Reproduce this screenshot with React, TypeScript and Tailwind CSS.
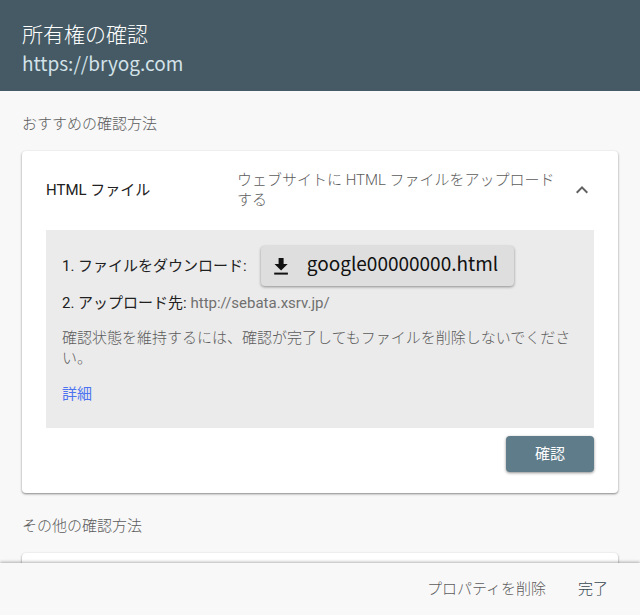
import { useState } from "react";

const cardClass =
    "bg-white rounded-sm shadow-[0_1px_2px_rgba(0,0,0,0.32),0_1px_3px_rgba(0,0,0,0.18)]";

function DownloadIcon() {
    return (
        <svg className="w-5 h-5" viewBox="0 0 20 20" fill="currentColor" aria-hidden="true">
            <path d="M7.6 2h5v6h4.1L10.1 14.4 3.5 8h4.1z" />
            <path d="M3.2 16.6h13.7v2H3.2z" />
        </svg>
    );
}

function ChevronUpIcon() {
    return (
        <svg className="w-6 h-6" viewBox="0 0 24 24" fill="currentColor" aria-hidden="true">
            <path d="M12 8l-6 6 1.41 1.41L12 10.83l4.59 4.58L18 14z" />
        </svg>
    );
}

function SectionLabel({ children }: { children: string }) {
    return <h2 className="mb-[17px] font-light text-[#5c5c5c]">{children}</h2>;
}

function HtmlFileMethod() {
    const [open, setOpen] = useState(true);

    return (
        <div className={cardClass}>
            <button
                type="button"
                aria-expanded={open}
                onClick={() => setOpen(!open)}
                className="flex w-full items-center px-6 pt-[19px] pb-5 text-left cursor-pointer"
            >
                <span className="w-[191px] shrink-0 text-[#212121]">HTML ファイル</span>
                <span className="flex-1 pr-3 font-light text-[#5c5c5c]">
                    ウェブサイトに HTML ファイルをアップロードする
                </span>
                <span className="shrink-0 text-[#606060]">
                    <ChevronUpIcon />
                </span>
            </button>
            {open ? (
                <div className="px-6 pb-[21px]">
                    <div className="bg-[#ebebeb] px-4 pt-4 pb-6">
                        <div className="flex items-center gap-[14px]">
                            <p className="text-[#212121]">1. ファイルをダウンロード:</p>
                            <button
                                type="button"
                                className="flex h-10 items-center gap-4 rounded-sm bg-[#dedede] pl-[10px] pr-4 font-['Noto_Sans_CJK_JP',sans-serif] text-[19px] text-[#111] shadow-[0_1px_3px_rgba(0,0,0,0.4)] cursor-pointer"
                            >
                                <DownloadIcon />
                                <span className="pb-1.5">google00000000.html</span>
                            </button>
                        </div>
                        <p className="mt-[7px] text-[#212121]">
                            2. アップロード先: <span className="text-[#707070]">http://sebata.xsrv.jp/</span>
                        </p>
                        <p className="mt-[15px] font-light text-[#5c5c5c]">
                            確認状態を維持するには、確認が完了してもファイルを削除しないでください。
                        </p>
                        <p className="mt-4">
                            <a href="#details" className="text-[#4d73f0]">
                                詳細
                            </a>
                        </p>
                    </div>
                    <div className="mt-2 flex justify-end">
                        <button
                            type="button"
                            className="h-9 rounded-sm bg-[#5f7c8a] px-[29px] text-white shadow-[0_1px_3px_rgba(0,0,0,0.45)] cursor-pointer"
                        >
                            確認
                        </button>
                    </div>
                </div>
            ) : null}
        </div>
    );
}

export default function App() {
    return (
        <div className="flex h-screen flex-col bg-[#f8f8f8] font-[Roboto,'Noto_Sans_CJK_JP',sans-serif] text-[15px] leading-5">
            <header className="shrink-0 bg-[#455a64] px-[22px] pt-[19px] pb-[14px] font-['Noto_Sans_CJK_JP',sans-serif]">
                <h1 className="text-[21px] leading-7 font-light text-white">所有権の確認</h1>
                <p className="mt-0.5 text-[19px] leading-7 text-[#d3e2e9]">https://bryog.com</p>
            </header>
            <main className="min-h-0 flex-1 overflow-hidden px-[22px] pt-[23px]">
                <section>
                    <SectionLabel>おすすめの確認方法</SectionLabel>
                    <HtmlFileMethod />
                </section>
                <section className="mt-[23px]">
                    <SectionLabel>その他の確認方法</SectionLabel>
                    <div className={`${cardClass} h-20`} />
                </section>
            </main>
            <footer className="relative flex h-[52px] shrink-0 items-center justify-end gap-8 bg-[#f8f8f8] px-8 shadow-[0_-1px_3px_rgba(0,0,0,0.3)]">
                <button type="button" className="font-light text-[#5c5c5c] cursor-pointer">
                    プロパティを削除
                </button>
                <button type="button" className="font-light text-[#37474f] cursor-pointer">
                    完了
                </button>
            </footer>
        </div>
    );
}
